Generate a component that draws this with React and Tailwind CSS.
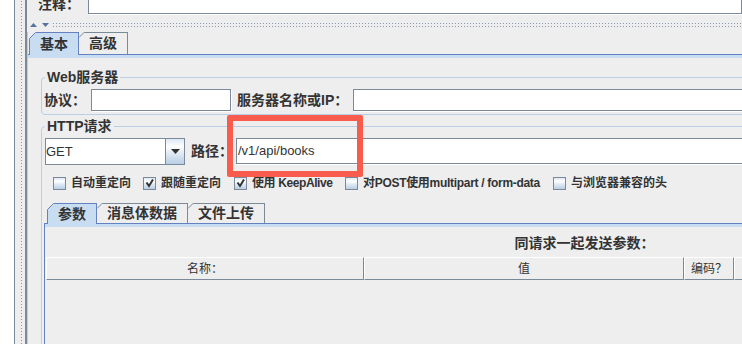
import React from "react";

const bevel =
  "bg-[linear-gradient(to_bottom,#dde8f3_0%,#ffffff_30%,#dde8f3_60%,#b8cfe5_100%)]";
const dots =
  "bg-[radial-gradient(circle,#8797ad_0.7px,transparent_1px)] bg-[length:3px_3px]";
const field = "border border-[#7a8a99] bg-white shadow-[1px_1px_0_#ffffff]";

function Tab({ label, selected, first, size }) {
  const color = selected ? "#6382bf" : "#7a8a99";
  return (
    <div
      className={`relative flex items-center border-t border-r px-[10px] text-[14px] font-bold ${
        first ? "border-l" : ""
      } ${
        selected
          ? "z-10 -mb-px border-[#6382bf] bg-[#c8ddf2]"
          : "border-[#7a8a99] bg-[#eeeeee]"
      } ${size}`}
    >
      {first ? (
        <svg className="absolute -left-px -top-px" width="7" height="7">
          <polygon points="0,0 7,0 0,7" fill="#eeeeee" />
          <line x1="0.5" y1="6.5" x2="6.5" y2="0.5" stroke={color} />
        </svg>
      ) : (
        <svg className="absolute left-0 -top-px" width="6" height="6">
          <polygon points="0,0 6,0 0,6" fill="#eeeeee" />
          <line x1="0" y1="5.5" x2="5.5" y2="0" stroke={color} />
        </svg>
      )}
      {label}
    </div>
  );
}

function Check({ checked, label, className, textClass = "" }) {
  return (
    <div className={`flex items-center gap-[5px] ${className}`}>
      <span className={`flex h-[13px] w-[13px] shrink-0 border border-[#7a8a99] ${bevel}`}>
        {checked && (
          <svg width="11" height="11" viewBox="0 0 11 11">
            <polyline
              points="2.5,4.5 5,8 9,1.5"
              fill="none"
              stroke="#333333"
              strokeWidth="2"
            />
          </svg>
        )}
      </span>
      <span className={`whitespace-nowrap text-[12px] font-bold leading-[13px] ${textClass}`}>
        {label}
      </span>
    </div>
  );
}

function HeadCell({ label, className }) {
  return (
    <div
      className={`flex items-center justify-center border-t border-l border-t-white border-l-white border-b border-r border-b-[#7a8a99] border-r-[#7a8a99] text-[12px] ${className}`}
    >
      {label}
    </div>
  );
}

export default function App() {
  return (
    <div className="relative flex h-[344px] w-[742px] overflow-hidden bg-white font-[family-name:'Liberation_Sans','Noto_Sans_CJK_SC',sans-serif] text-[#333333]">
      <div className="w-[15px] shrink-0 border-r border-[#7a8a99] bg-white" />
      <div className="flex w-[10px] shrink-0 bg-[#eeeeee] pl-[5px]">
        <div className={`w-[3px] ${dots}`} />
      </div>

      <div className="flex min-w-0 flex-1 flex-col border-l-2 border-[#7a8a99] bg-[#eeeeee]">
        {/* comment row, cut at the top */}
        <div className="-mt-[12px] flex h-[26px] shrink-0">
          <div className="flex w-[61px] items-center pl-[11px] pt-[6px] text-[14px] font-bold">
            注释：
          </div>
          <div className={`flex-1 ${field}`} />
        </div>

        {/* split pane divider */}
        <div className="mt-[8px] flex h-[5px] shrink-0 items-center">
          <svg className="ml-[3px]" width="7" height="4">
            <polygon points="3.5,0 7,4 0,4" fill="#56739f" />
          </svg>
          <svg className="ml-[5px]" width="7" height="4">
            <polygon points="0,0 7,0 3.5,4" fill="#56739f" />
          </svg>
          <div className={`ml-[3px] h-[5px] flex-1 ${dots}`} />
        </div>

        {/* outer tabs */}
        <div className="mt-[5px] flex flex-1 flex-col border-l border-[#b8cfe5]">
          <div className="relative z-10 flex h-[22px] shrink-0 items-end pl-[1px]">
            <Tab label="基本" selected first size="h-[23px]" />
            <Tab label="高级" size="h-[22px]" />
          </div>
          <div className="flex-1 border-t border-[#6382bf]">
            <div className="h-[3px] bg-[#c8ddf2]" />

            <fieldset className="ml-[13px] mt-[11px] w-[1090px] rounded-[4px] border border-[#b8cfe5] pb-[3px] pl-[2px] pr-[3px]">
              <legend className="ml-[1px] px-[2px] text-[14px] font-bold leading-[16px]">
                Web服务器
              </legend>
              <div className="mt-[4px] flex h-[22px] items-center">
                <div className="w-[47px] text-[14px] font-bold">协议：</div>
                <div className={`h-full w-[140px] ${field}`} />
                <div className="ml-[6px] w-[116px] whitespace-nowrap text-[14px] font-bold">
                  服务器名称或IP：
                </div>
                <div className={`h-full flex-1 ${field}`} />
              </div>
            </fieldset>

            <fieldset className="ml-[13px] mt-[3px] w-[1090px] rounded-[4px] border border-[#b8cfe5] pb-[3px] pl-[2px] pr-[3px]">
              <legend className="ml-[1px] px-[2px] text-[14px] font-bold leading-[16px]">
                HTTP请求
              </legend>
              <div className="mt-[4px] flex items-start">
                <div className="ml-[1px] flex h-[27px] w-[140px] border border-[#7a8a99] bg-white">
                  <div className="flex flex-1 items-center text-[13px]">GET</div>
                  <div className={`flex w-[19px] items-center justify-center border-l border-[#7a8a99] ${bevel}`}>
                    <svg width="9" height="5">
                      <polygon points="0,0 9,0 4.5,5" fill="#333333" />
                    </svg>
                  </div>
                </div>
                <div className="ml-[6px] flex h-[26px] w-[45px] items-center text-[14px] font-bold">
                  路径：
                </div>
                <div className={`flex h-[26px] flex-1 items-center pl-[1px] text-[13px] ${field}`}>
                  /v1/api/books
                </div>
              </div>

              <div className="mt-[12px] flex h-[13px] items-center pl-[9px]">
                <Check label="自动重定向" className="w-[90px]" />
                <Check label="跟随重定向" checked className="w-[91px]" />
                <Check
                  label="使用 KeepAlive"
                  checked
                  className="w-[111px]"
                  textClass="tracking-[-0.4px]"
                />
                <Check
                  label="对POST使用multipart / form-data"
                  className="w-[208px]"
                  textClass="tracking-[-0.3px]"
                />
                <Check label="与浏览器兼容的头" />
              </div>

              <div className="mt-[13px] w-[1080px]">
                <div className="relative z-10 flex h-[20px] items-end pl-[3px]">
                  <Tab label="参数" selected first size="h-[21px]" />
                  <Tab label="消息体数据" size="h-[20px]" />
                  <Tab label="文件上传" size="h-[20px]" />
                </div>
                <div className="h-[140px] border-l border-t border-[#6382bf]">
                  <div className="h-[3px] bg-[#c8ddf2]" />
                  <div className="mt-[8px] text-center text-[14px] font-bold leading-[16px]">
                    同请求一起发送参数：
                  </div>
                  <div className="ml-[1px] mt-[6px] flex h-[23px]">
                    <HeadCell label="名称：" className="w-[318px]" />
                    <HeadCell label="值" className="w-[320px]" />
                    <HeadCell label="编码？" className="w-[50px]" />
                    <HeadCell label="" className="flex-1" />
                  </div>
                </div>
              </div>
            </fieldset>
          </div>
        </div>
      </div>

      {/* red annotation box */}
      <div className="absolute left-[227px] top-[115px] h-[62px] w-[136px] rounded-[2px] border-[6px] border-[#f95b4c]" />
    </div>
  );
}
